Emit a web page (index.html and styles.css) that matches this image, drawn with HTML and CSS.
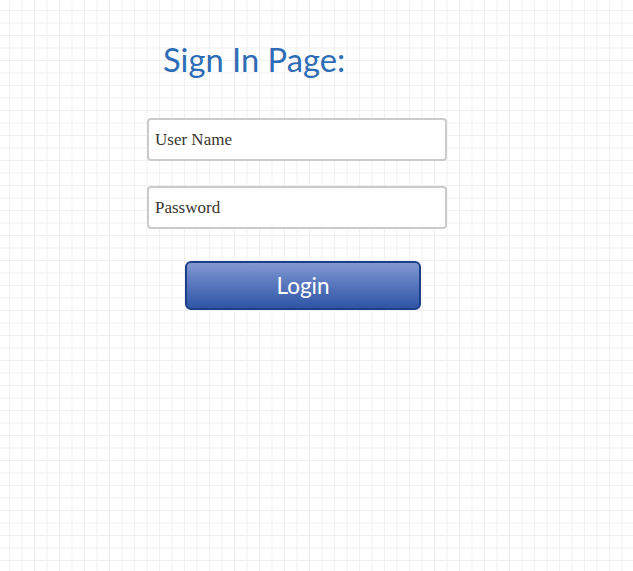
FILE: index.html
```html
<!DOCTYPE html>
<html>
<head>
<meta charset="utf-8">
<link rel="stylesheet" href="styles.css">
</head>
<body>
<div class="page">
  <form class="signin">
    <h1 class="title">Sign In Page:</h1>
    <div class="field">User Name</div>
    <div class="field">Password</div>
    <button type="button" class="login">Login</button>
  </form>
</div>
</body>
</html>
```
FILE: styles.css
```css
html, body {
  margin: 0;
  padding: 0;
}
body {
  width: 633px;
  height: 571px;
  overflow: hidden;
  background-color: #ffffff;
  background-image:
    linear-gradient(to right, #f0f0f0 0, #f0f0f0 1px, transparent 1px),
    linear-gradient(to bottom, #f0f0f0 0, #f0f0f0 1px, transparent 1px);
  background-size: 12.5px 12.5px;
  background-position: 9px 10px;
}
.page {
  padding: 40px 0 0 147px;
}
.signin {
  width: 300px;
  display: flex;
  flex-direction: column;
  margin: 0;
}
.title {
  margin: 0 0 38px 16px;
  font-family: Lato, "Open Sans", sans-serif;
  font-weight: 400;
  font-size: 32.7px;
  line-height: 40px;
  color: #2e6db5;
}
.field {
  box-sizing: border-box;
  width: 300px;
  height: 43px;
  border: 2.5px solid #cbcbcb;
  border-radius: 4px;
  background: #ffffff;
  padding: 1px 0 0 6px;
  display: flex;
  align-items: center;
  font-family: "Liberation Serif", "Times New Roman", serif;
  font-size: 17px;
  color: #3a3530;
  margin-bottom: 25px;
}
.login {
  box-sizing: border-box;
  margin: 7px 0 0 38px;
  width: 236px;
  height: 49px;
  border: 2px solid #1d3f87;
  border-radius: 6px;
  background: linear-gradient(to bottom, #8199d2 0%, #5a78be 45%, #2f56a6 100%);
  color: #ffffff;
  font-family: Lato, "Open Sans", sans-serif;
  font-size: 22.5px;
  padding: 0;
  cursor: pointer;
}
```
